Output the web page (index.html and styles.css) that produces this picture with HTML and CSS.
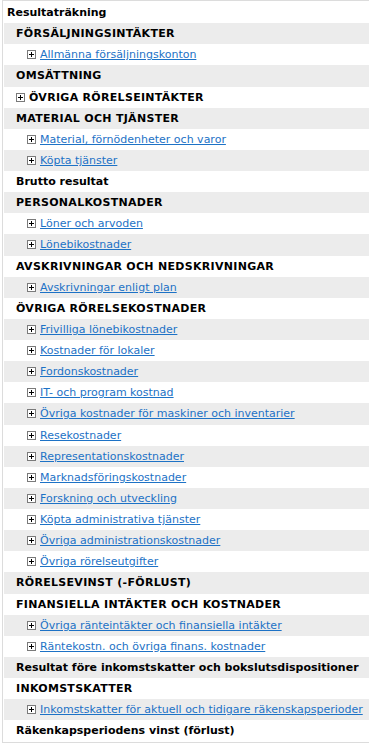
FILE: index.html
```html
<!DOCTYPE html>
<html lang="sv">
<head>
    <meta charset="UTF-8">
    <meta name="viewport" content="width=device-width, initial-scale=1.0">
    <title>Resultaträkning</title>
    <link rel="stylesheet" href="styles.css">
</head>
<body>
    <div class="report">
        <div class="row title">Resultaträkning</div>
        <div class="row group caps">FÖRSÄLJNINGSINTÄKTER</div>
        <div class="row account"><span class="plus"></span><a href="#">Allmänna försäljningskonton</a></div>
        <div class="row group caps">OMSÄTTNING</div>
        <div class="row group caps"><span class="plus"></span>ÖVRIGA RÖRELSEINTÄKTER</div>
        <div class="row group caps">MATERIAL OCH TJÄNSTER</div>
        <div class="row account"><span class="plus"></span><a href="#">Material, förnödenheter och varor</a></div>
        <div class="row account"><span class="plus"></span><a href="#">Köpta tjänster</a></div>
        <div class="row group">Brutto resultat</div>
        <div class="row group caps">PERSONALKOSTNADER</div>
        <div class="row account"><span class="plus"></span><a href="#">Löner och arvoden</a></div>
        <div class="row account"><span class="plus"></span><a href="#">Lönebikostnader</a></div>
        <div class="row group caps">AVSKRIVNINGAR OCH NEDSKRIVNINGAR</div>
        <div class="row account"><span class="plus"></span><a href="#">Avskrivningar enligt plan</a></div>
        <div class="row group caps">ÖVRIGA RÖRELSEKOSTNADER</div>
        <div class="row account"><span class="plus"></span><a href="#">Frivilliga lönebikostnader</a></div>
        <div class="row account"><span class="plus"></span><a href="#">Kostnader för lokaler</a></div>
        <div class="row account"><span class="plus"></span><a href="#">Fordonskostnader</a></div>
        <div class="row account"><span class="plus"></span><a href="#">IT- och program kostnad</a></div>
        <div class="row account"><span class="plus"></span><a href="#">Övriga kostnader för maskiner och inventarier</a></div>
        <div class="row account"><span class="plus"></span><a href="#">Resekostnader</a></div>
        <div class="row account"><span class="plus"></span><a href="#">Representationskostnader</a></div>
        <div class="row account"><span class="plus"></span><a href="#">Marknadsföringskostnader</a></div>
        <div class="row account"><span class="plus"></span><a href="#">Forskning och utveckling</a></div>
        <div class="row account"><span class="plus"></span><a href="#">Köpta administrativa tjänster</a></div>
        <div class="row account"><span class="plus"></span><a href="#">Övriga administrationskostnader</a></div>
        <div class="row account"><span class="plus"></span><a href="#">Övriga rörelseutgifter</a></div>
        <div class="row group caps">RÖRELSEVINST (-FÖRLUST)</div>
        <div class="row group caps">FINANSIELLA INTÄKTER OCH KOSTNADER</div>
        <div class="row account"><span class="plus"></span><a href="#">Övriga ränteintäkter och finansiella intäkter</a></div>
        <div class="row account"><span class="plus"></span><a href="#">Räntekostn. och övriga finans. kostnader</a></div>
        <div class="row group">Resultat före inkomstskatter och bokslutsdispositioner</div>
        <div class="row group caps">INKOMSTSKATTER</div>
        <div class="row account"><span class="plus"></span><a href="#">Inkomstskatter för aktuell och tidigare räkenskapsperioder</a></div>
        <div class="row group">Räkenkapsperiodens vinst (förlust)</div>
    </div>
</body>
</html>
```

FILE: styles.css
```css
body {
    margin: 0;
    font-family: Verdana, "DejaVu Sans", sans-serif;
    font-size: 11px;
    color: #000;
    background: #fff;
    overflow: hidden;
}

.report {
    margin-left: 2px;
    width: 380px;
    border: 1px solid #dcdcdc;
    padding: 1px;
}

.row {
    height: 21.14px;
    line-height: 21px;
    white-space: nowrap;
    display: flex;
    align-items: center;
}

.row:nth-child(even) {
    background: #ececec;
}

.title {
    font-weight: bold;
    padding-left: 3px;
}

.group {
    font-weight: bold;
    padding-left: 12px;
}

/* upper-case headings run a little wider */
.caps {
    letter-spacing: 0.3px;
}

.account {
    padding-left: 23px;
}

a {
    color: #1d72c6;
    text-decoration: underline;
}

/* small expand box in front of each account */
.plus {
    position: relative;
    width: 7px;
    height: 7px;
    border: 1px solid #7a7a7a;
    background: #fff;
    margin-right: 4px;
    flex: none;
}

.plus::before,
.plus::after {
    content: "";
    position: absolute;
    background: #000;
}

.plus::before {
    left: 1px;
    top: 3px;
    width: 5px;
    height: 1px;
}

.plus::after {
    left: 3px;
    top: 1px;
    width: 1px;
    height: 5px;
}
```
